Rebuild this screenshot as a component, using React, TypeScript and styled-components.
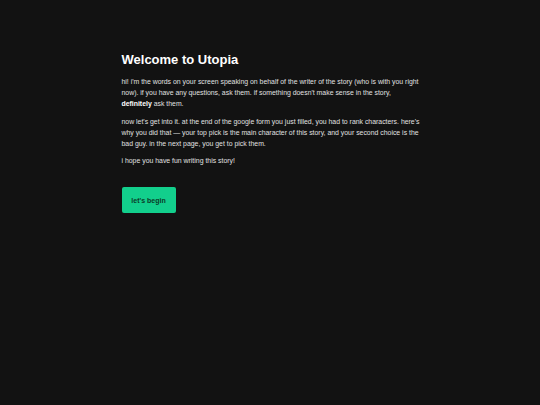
import React from "react";
import styled, { createGlobalStyle } from "styled-components";

const Global = createGlobalStyle`
  html, body {
    margin: 0;
    padding: 0;
    background: #121212;
  }
  body {
    font-family: "Liberation Sans", Arial, sans-serif;
    color: #e6e6e6;
  }
`;

const Page = styled.main`
  min-height: 405px;
  background: #121212;
  padding: 52px 0 0 2px;
  box-sizing: border-box;
`;

const Content = styled.section`
  width: 299px;
  margin: 0 auto;
  display: flex;
  flex-direction: column;
  align-items: flex-start;
`;

const Title = styled.h1`
  margin: 0 0 8px;
  font-size: 13px;
  line-height: 16px;
  font-weight: 700;
  color: #ffffff;
`;

const Paragraph = styled.p<{ $gap?: number }>`
  margin: 0 0 ${(p) => p.$gap ?? 6}px;
  font-size: 6.9px;
  line-height: 11px;
  color: #e0e0e0;

  strong {
    color: #ffffff;
    font-weight: 700;
  }
`;

const Button = styled.button`
  margin-top: 15px;
  width: 54px;
  height: 26px;
  border: none;
  border-radius: 2px;
  background: #12cf8c;
  color: #0b3b28;
  font-family: "Liberation Sans", Arial, sans-serif;
  font-size: 7px;
  font-weight: 700;
  cursor: pointer;
  padding: 0;
`;

export default function App() {
  return (
    <>
      <Global />
      <Page>
        <Content>
          <Title>Welcome to Utopia</Title>
          <Paragraph $gap={7}>
            hi! i'm the words on your screen speaking on behalf of the writer of the story (who is with you right
            now). if you have any questions, ask them. if something doesn't make sense in the story,{" "}
            <strong>definitely</strong> ask them.
          </Paragraph>
          <Paragraph>
            now let's get into it. at the end of the google form you just filled, you had to rank characters. here's
            why you did that — your top pick is the main character of this story, and your second choice is the
            bad guy. in the next page, you get to pick them.
          </Paragraph>
          <Paragraph>i hope you have fun writing this story!</Paragraph>
          <Button>let's begin</Button>
        </Content>
      </Page>
    </>
  );
}
